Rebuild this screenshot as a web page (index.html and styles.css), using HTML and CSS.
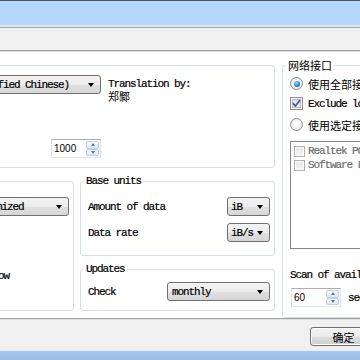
FILE: index.html
```html
<!DOCTYPE html>
<html>
<head>
<meta charset="utf-8">
<title>Settings</title>
<link rel="stylesheet" href="styles.css">
</head>
<body>
<div class="window">
  <div class="frame-top"></div>
  <div class="caption"></div>
  <div class="toolbar"></div>
  <div class="panel">
    <div class="left-col">
      <fieldset class="group group-top">
        <legend>Language</legend>
        <div class="lang-row">
          <div class="combo combo-lang"><span class="combo-text">Chinese (Simplified Chinese)</span><span class="arrow"></span></div>
          <div class="translator">
            <div class="line">Translation by:</div>
            <div class="line cjk name">郑鄹</div>
          </div>
        </div>
        <div class="spin spin-1000"><span class="spin-value">1000</span><span class="spin-btns"><span class="spin-btn"><span class="tri-up"></span></span><span class="spin-btn"><span class="tri-down"></span></span></span></div>
      </fieldset>
      <div class="bottom-row">
        <fieldset class="group group-window">
          <legend>Window</legend>
          <div class="combo combo-min"><span class="combo-text">Minimized</span><span class="arrow"></span></div>
          <div class="line show-window">Show window</div>
        </fieldset>
        <div class="stack">
          <fieldset class="group group-units">
            <legend>Base units</legend>
            <div class="row row-first"><span class="line">Amount of data</span><div class="combo combo-unit"><span class="combo-text">iB</span><span class="arrow"></span></div></div>
            <div class="row row-second"><span class="line">Data rate</span><div class="combo combo-unit"><span class="combo-text">iB/s</span><span class="arrow"></span></div></div>
          </fieldset>
          <fieldset class="group group-updates">
            <legend>Updates</legend>
            <div class="row row-check"><span class="line">Check</span><div class="combo combo-check"><span class="combo-text">monthly</span><span class="arrow"></span></div></div>
          </fieldset>
        </div>
      </div>
    </div>
    <fieldset class="group group-net">
      <legend class="cjk">网络接口</legend>
      <div class="opt opt-all"><span class="radio on"></span><span class="cjk">使用全部接口</span></div>
      <div class="opt opt-excl">
        <svg class="check" width="13" height="13" viewBox="0 0 13 13"><rect x="0.5" y="0.5" width="12" height="12" fill="#f6f6f6" stroke="#8e8f8f"/><rect x="2.5" y="2.5" width="8" height="8" fill="#e4e6e9" stroke="#b8bcc2"/><path d="M3 6.3 L5.4 9 L10 3" fill="none" stroke="#3b5aa0" stroke-width="1.7"/></svg>
        <span class="line">Exclude loopback interface</span>
      </div>
      <div class="opt opt-sel"><span class="radio"></span><span class="cjk">使用选定接口</span></div>
      <div class="listbox">
        <div class="item"><span class="box"></span><span>Realtek PCIe GBE Family Controller</span></div>
        <div class="item"><span class="box"></span><span>Software Loopback Interface 1</span></div>
      </div>
      <div class="line scan-label">Scan of available interfaces every</div>
      <div class="scan-row">
        <div class="spin spin-60"><span class="spin-value">60</span><span class="spin-btns"><span class="spin-btn"><span class="tri-up"></span></span><span class="spin-btn"><span class="tri-down"></span></span></span></div>
        <span class="line">seconds</span>
      </div>
    </fieldset>
  </div>
  <div class="button-bar">
    <button class="btn cjk">确定</button>
    <button class="btn cjk">取消</button>
  </div>
  <div class="taskbar"></div>
</div>
</body>
</html>
```
FILE: styles.css
```css
* { box-sizing: border-box; }
html, body {
  margin: 0;
  padding: 0;
  width: 360px;
  height: 360px;
  overflow: hidden;
  background: #fff;
}
body {
  font-family: "Liberation Mono", monospace;
  font-size: 11px;
  letter-spacing: -1.1px;
  color: #000;
  -webkit-text-stroke: 0.2px #000;
}
.cjk {
  font-family: "Noto Sans CJK SC", sans-serif;
  letter-spacing: 0;
  font-size: 11px;
  -webkit-text-stroke: 0;
}
.window {
  width: 600px;
  height: 360px;
  margin-left: -120px;
  display: flex;
  flex-direction: column;
}
.frame-top { height: 1px; background: #4f5256; flex: none; }
.caption {
  height: 26px;
  flex: none;
  background: #b5d7f9;
  border-bottom: 2px solid #d9e7f5;
}
.toolbar {
  height: 25px;
  flex: none;
  border-top: 1px solid #a7a9ab;
  border-bottom: 1px solid #dcdcdc;
  background: linear-gradient(#f0f0f0 0 22px, #a0a0a0 22px 23px);
}
.panel {
  height: 266px;
  flex: none;
  background: #fff;
  padding-top: 6px;
  display: grid;
  grid-template-columns: 395px 170px;
  column-gap: 7px;
  align-items: stretch;
}
.group {
  margin: 0;
  min-width: 0;
  border: 1px solid #d5dfe5;
  border-radius: 3px;
  padding: 0 4px 0 7px;
}
.group legend {
  padding: 0 2px;
  margin-left: -4px;
  line-height: 12px;
  white-space: nowrap;
}
.group-top legend, .group-net legend { line-height: 14px; }
.line { line-height: 12px; white-space: nowrap; }

/* top-left group */
.group-top { padding-bottom: 9px; }
.lang-row {
  display: flex;
  align-items: flex-start;
  margin-top: 3px;
}
.combo {
  height: 19px;
  flex: none;
  display: flex;
  align-items: center;
  border: 1px solid #707070;
  border-radius: 3px;
  background: linear-gradient(#f3f3f3, #ececec 50%, #e0e0e0 51%, #d6d6d6);
  padding-left: 3px;
  overflow: hidden;
}
.combo-text {
  flex: 1;
  min-width: 0;
  overflow: hidden;
  white-space: nowrap;
  line-height: 12px;
}
.arrow {
  flex: none;
  width: 0;
  height: 0;
  margin: 1px 6px 0 3px;
  border-top: 4px solid #000;
  border-left: 3.5px solid transparent;
  border-right: 3.5px solid transparent;
}
.combo-lang { width: 190px; margin-left: 23px; }
.translator { margin-left: 7px; margin-top: 3px; }
.translator .name { line-height: 11px; margin-top: 1px; }
.spin {
  display: flex;
  width: 50px;
  height: 19px;
  border: 1px solid;
  border-color: #abadb3 #dbdfe6 #e3e9ef #e2e3ea;
  background: #fff;
}
.spin-value {
  flex: 1;
  font-family: "Liberation Sans", sans-serif;
  font-size: 10px;
  letter-spacing: 0;
  line-height: 17px;
  padding-left: 2px;
  -webkit-text-stroke: 0;
}
.spin-btns {
  width: 14px;
  display: flex;
  flex-direction: column;
  padding: 1px 1px 1px 0;
}
.spin-btn {
  flex: 1;
  display: flex;
  align-items: center;
  justify-content: center;
  border: 1px solid #c3cfdd;
  border-radius: 2px;
  background: linear-gradient(#f4f8fc, #dfe8f3);
}
.tri-up, .tri-down {
  width: 0; height: 0;
  border-left: 2.5px solid transparent;
  border-right: 2.5px solid transparent;
}
.tri-up { border-bottom: 3px solid #5a78a8; }
.tri-down { border-top: 3px solid #5a78a8; }
.spin-1000 { margin-top: 37px; margin-left: 163px; }

/* bottom row */
.bottom-row {
  display: flex;
  gap: 6px;
  margin-top: 7px;
  align-items: stretch;
}
.group-window { width: 194px; flex: none; }
.combo-min { width: 99px; margin-left: 82px; margin-top: 10px; }
.show-window { margin-top: 54px; margin-left: 60.5px; }
.stack {
  width: 195px;
  flex: none;
  display: flex;
  flex-direction: column;
  gap: 7px;
}
.row {
  display: flex;
  align-items: center;
  justify-content: space-between;
}
.group-units { padding-bottom: 13px; }
.row-first { margin-top: 10px; }
.row-second { margin-top: 7px; }
.combo-unit { width: 43px; }
.group-updates { padding-bottom: 9px; }
.row-check { margin-top: 7px; }
.combo-check { width: 103px; padding-left: 4px; }

/* network group */
.group-net { padding-bottom: 3px; }
.group-net legend { font-size: 11px; }
.opt {
  display: flex;
  align-items: center;
  height: 17px;
  gap: 5px;
  white-space: nowrap;
}
.opt-all { margin-top: 3px; }
.opt-excl { margin-top: 3px; }
.opt-sel { margin-top: 4px; }
.radio {
  flex: none;
  width: 13px;
  height: 13px;
  border-radius: 50%;
  border: 1px solid #8e8f8f;
  background: radial-gradient(circle at 50% 45%, #ffffff 20%, #d9dadb 90%);
  display: flex;
  align-items: center;
  justify-content: center;
}
.radio.on::after {
  content: "";
  width: 6px;
  height: 6px;
  border-radius: 50%;
  background: radial-gradient(circle at 40% 35%, #9fdcff, #2a86d6 55%, #174f86);
}
.check { flex: none; display: block; }
.listbox {
  margin-top: 8px;
  height: 108px;
  border: 1px solid #828790;
  background: #fff;
  padding: 2px 0 0 3px;
}
.item {
  display: flex;
  align-items: center;
  gap: 3px;
  height: 14px;
  color: #6d6d6d;
  -webkit-text-stroke: 0.2px #6d6d6d;
  white-space: nowrap;
}
.item .box {
  flex: none;
  width: 11px;
  height: 11px;
  border: 1px solid #b1b1b1;
  background: linear-gradient(#e8e8e8, #f6f6f6);
  box-shadow: inset 0 0 0 1px #fafafa;
}
.scan-label { margin-top: 20px; }
.scan-row {
  display: flex;
  align-items: center;
  gap: 7px;
  margin-top: 7px;
  white-space: nowrap;
}
.spin-60 { margin-left: 1px; flex: none; }

/* buttons */
.button-bar {
  height: 32px;
  flex: none;
  background: #f0f0f0;
  border-top: 1px solid #a0a0a0;
  box-shadow: inset 0 1px 0 #e2e2e2;
  display: flex;
  align-items: flex-start;
  padding: 8px 0 0 430px;
  gap: 10px;
}
.btn {
  width: 67px;
  height: 19px;
  padding: 0;
  border: 1px solid #707070;
  border-radius: 3px;
  background: linear-gradient(#f2f2f2, #ebebeb 50%, #dddddd 51%, #cfcfcf);
  box-shadow: inset 0 0 0 1px #fbfbfb;
  line-height: 16px;
  color: #000;
}
.taskbar {
  height: 10px;
  flex: none;
  border-top: 1px solid #e6eef8;
  background: linear-gradient(#a9c8ec, #9dbde3);
}
```
